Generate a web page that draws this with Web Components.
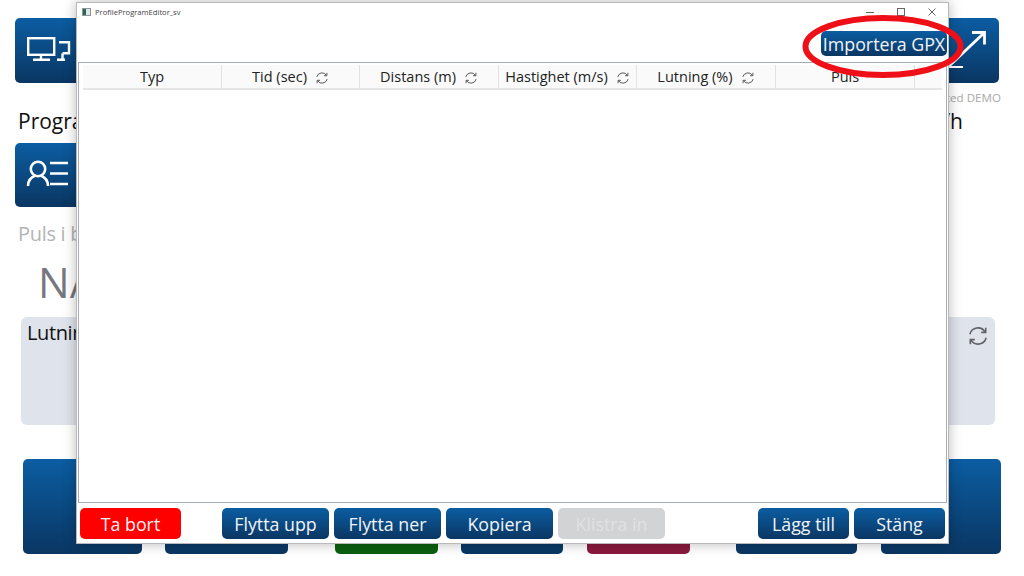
<!DOCTYPE html>
<html lang="sv">
<head>
<meta charset="utf-8">
<title>ProfileProgramEditor_sv</title>
<style>
  html, body { margin: 0; padding: 0; background: #fff; }
  body { width: 1024px; height: 576px; overflow: hidden; font-family: "Open Sans", "Liberation Sans", sans-serif; }
</style>
</head>
<body>

<trainer-page>
  <span slot="title">Program</span>
  <span slot="demo">Limited DEMO</span>
  <span slot="speed">0,0 km/h</span>
  <span slot="pulse">Puls i bpm</span>
  <span slot="value">N/A</span>
  <span slot="card">Lutning</span>
</trainer-page>

<editor-window title-text="ProfileProgramEditor_sv">
  <grid-cell>Typ</grid-cell>
  <grid-cell refresh>Tid (sec)</grid-cell>
  <grid-cell refresh>Distans (m)</grid-cell>
  <grid-cell refresh>Hastighet (m/s)</grid-cell>
  <grid-cell refresh>Lutning (%)</grid-cell>
  <grid-cell>Puls</grid-cell>
  <grid-cell></grid-cell>
</editor-window>

<script>
// shared icon used in the grid header and on the card behind the window
const REFRESH_SVG = `
  <svg viewBox="0 0 20 20" fill="none" stroke="currentColor" stroke-width="1.4" width="100%" height="100%">
    <path d="M2.600 8.400A7.600 7.600 0 0 1 16.400 6.200"/>
    <path d="M17.400 11.600A7.600 7.600 0 0 1 3.600 13.800"/>
    <path d="M17 2.600v4.100h-4.100"/>
    <path d="M3 17.400v-4.100h4.100"/>
  </svg>`;

class AppTile extends HTMLElement {
  constructor() {
    super();
    this.attachShadow({ mode: 'open' }).innerHTML = `
      <style>
        :host {
          display: block;
          box-sizing: border-box;
          border-radius: 5px;
          background: linear-gradient(#0b5da2, #0a3662);
          overflow: hidden;
        }
        :host([color="green"]) { background: #0b5f10; }
        :host([color="crimson"]) { background: #8a1a3f; }
      </style>
      <slot></slot>`;
  }
}
customElements.define('app-tile', AppTile);

class TrainerPage extends HTMLElement {
  constructor() {
    super();
    this.attachShadow({ mode: 'open' }).innerHTML = `
      <style>
        :host {
          display: block;
          box-sizing: border-box;
          width: 1024px;
          height: 576px;
          padding: 18px 25px 22px 15px;
          color: #111;
        }
        .wrap { display: flex; flex-direction: column; height: 100%; }
        .top { display: flex; justify-content: space-between; }
        .top app-tile { width: 100px; height: 65px; }
        .demo {
          align-self: flex-end;
          margin: 7px -2px 0 0;
          font-size: 11.600px;
          line-height: 16px;
          color: #a9a9a9;
        }
        .info { display: flex; justify-content: space-between; padding: 0 36px 0 3px; font-size: 21px; line-height: 28px; margin-top: 1px; }
        .user { width: 100px; height: 64px; margin-top: 8px; }
        .pulse { padding-left: 3px; margin-top: 13px; font-size: 20px; line-height: 27px; color: #b4b4b4; letter-spacing: -.3px; }
        .value { padding-left: 23px; margin-top: 5px; font-size: 42px; line-height: 60px; color: #77777f; }
        .card {
          display: flex;
          justify-content: space-between;
          box-sizing: border-box;
          height: 108px;
          margin: 5px 4px 0 6px;
          padding: 2px 6px;
          background: #dfe3eb;
          border-radius: 6px;
          font-size: 20px;
          line-height: 27px;
          letter-spacing: -.4px;
        }
        .card i { display: block; width: 22px; height: 22px; margin: 6px 0 0 0; color: #5f6166; }
        .bottom {
          display: flex;
          margin: auto 0 0 8px;
          height: 95px;
        }
        .bottom > app-tile { height: 95px; flex: none; }
        svg { display: block; width: 100%; height: 100%; }
      </style>
      <div class="wrap">
        <div class="top">
          <app-tile>
            <svg viewBox="0 0 100 65" fill="none" stroke="#fff" stroke-width="2.400">
              <rect x="13.200" y="20.200" width="26" height="16.600"/>
              <path d="M26 37v4M18 41.800h17"/>
              <path d="M44 24.200h10v11h-6.500M47.500 35.500v5.500M42 41.800h8"/>
            </svg>
          </app-tile>
          <app-tile>
            <svg viewBox="0 0 100 65" fill="none" stroke="#fff" stroke-width="2.800">
              <path d="M48 50L85 15M73 14.500h12.500v12"/>
              <path d="M50 49h14" stroke-width="2"/>
            </svg>
          </app-tile>
        </div>
        <div class="demo"><slot name="demo"></slot></div>
        <div class="info"><slot name="title"></slot><slot name="speed"></slot></div>
        <app-tile class="user">
          <svg viewBox="0 0 100 64" fill="none" stroke="#fff" stroke-width="2.600">
            <circle cx="23" cy="26" r="7.200"/>
            <path d="M13 43c0-5.500 3.500-9 7.500-10.500M33 43c0-5.500-3.500-9-7.500-10.500"/>
            <path d="M35 20h18M35 30.500h18M35 41h18"/>
          </svg>
        </app-tile>
        <div class="pulse"><slot name="pulse"></slot></div>
        <div class="value"><slot name="value"></slot></div>
        <div class="card"><slot name="card"></slot><i>${REFRESH_SVG}</i></div>
        <div class="bottom">
          <app-tile style="width:119px"></app-tile>
          <app-tile style="width:123px;margin-left:23px"></app-tile>
          <app-tile color="green" style="width:103px;margin-left:47px"></app-tile>
          <app-tile style="width:102px;margin-left:23px"></app-tile>
          <app-tile color="crimson" style="width:103px;margin-left:24px"></app-tile>
          <app-tile style="width:121px;margin-left:46px"></app-tile>
          <app-tile style="width:120px;margin-left:24px"></app-tile>
        </div>
      </div>`;
  }
}
customElements.define('trainer-page', TrainerPage);

class GridCell extends HTMLElement {
  constructor() {
    super();
    this.attachShadow({ mode: 'open' }).innerHTML = `
      <style>
        :host {
          display: flex;
          align-items: center;
          justify-content: center;
          gap: 8px;
          box-sizing: border-box;
          height: 25px;
          font-size: 14.500px;
          color: #222;
          background: #fafafa;
          border-right: 1px solid #e2e2e2;
          border-bottom: 2px solid #e6e6e6;
          white-space: nowrap;
        }
        :host(:last-child) { border-right: 0; }
        i { display: none; width: 14px; height: 14px; color: #555; }
        :host([refresh]) i { display: block; }
      </style>
      <slot></slot><i>${REFRESH_SVG}</i>`;
  }
}
customElements.define('grid-cell', GridCell);

class WinButton extends HTMLElement {
  constructor() {
    super();
    this.attachShadow({ mode: 'open' }).innerHTML = `
      <style>
        :host {
          display: flex;
          align-items: center;
          justify-content: center;
          box-sizing: border-box;
          height: 31px;
          border-radius: 5px;
          background: linear-gradient(#0b5da2, #0a3662);
          color: #f2f4f7;
          font-size: 17.800px;
          white-space: nowrap;
        }
        :host([kind="danger"]) { background: #ff0000; }
        :host([kind="disabled"]) { background: #d2d3d5; color: #e0e1e3; }
      </style>
      <slot></slot>`;
  }
}
customElements.define('win-button', WinButton);

class EditorWindow extends HTMLElement {
  constructor() {
    super();
    const title = this.getAttribute('title-text');
    this.attachShadow({ mode: 'open' }).innerHTML = `
      <style>
        /* floating window over the page, same for the callout ring */
        :host {
          position: absolute;
          left: 76px;
          top: 2px;
          width: 873px;
          height: 542px;
          box-sizing: border-box;
          display: flex;
          flex-direction: column;
          background: #fff;
          border: 1px solid #b9b9bd;
          box-shadow: 0 0 12px rgba(0,0,0,.28);
        }
        .titlebar { display: flex; align-items: center; height: 18px; padding: 0 0 0 5px; gap: 4px; font-size: 7.600px; color: #444; }
        .app { width: 9px; height: 8px; box-sizing: border-box; border: 1px solid #8f959c; background: linear-gradient(90deg, #2a6a4a 50%, #dfe6ee 50%); }
        .controls { margin-left: auto; display: flex; }
        .controls svg { display: block; width: 31px; height: 11px; }
        .tools { display: flex; justify-content: flex-end; height: 25px; margin: 10px 0 0; padding-right: 1px; }
        .tools win-button { width: 126px; height: 25px; }
        .grid {
          flex: 1;
          margin: 6px 1px 0;
          border: 1.500px solid #a9adb5;
          box-sizing: border-box;
          padding: 2px 4px 0 4px;
          min-height: 0;
        }
        .cols {
          display: grid;
          grid-template-columns: 139px 138px 139px 138px 139px 139px 1fr;
        }
        .actions { display: flex; height: 31px; padding: 5px 3px 4px 3px; }
        .actions win-button { width: 107px; margin-right: 5px; }
        .actions .remove { width: 101px; margin-right: 41px; }
        .actions .paste { margin-right: 93px; }
        .actions .small { width: 91px; }
        .actions .small:last-child { margin-right: 0; }
      </style>
      <div class="titlebar">
        <span class="app"></span><span>${title}</span>
        <div class="controls">
          <svg viewBox="0 0 31 11" fill="none" stroke="#666"><path d="M11 5.500h8"/></svg>
          <svg viewBox="0 0 31 11" fill="none" stroke="#666"><rect x="11.500" y="1.500" width="7" height="7"/></svg>
          <svg viewBox="0 0 31 11" fill="none" stroke="#666"><path d="M11.500 1.500l7 7M18.500 1.500l-7 7"/></svg>
        </div>
      </div>
      <div class="tools"><win-button>Importera GPX</win-button></div>
      <div class="grid"><div class="cols"><slot></slot></div></div>
      <div class="actions">
        <win-button kind="danger" class="remove">Ta bort</win-button>
        <win-button>Flytta upp</win-button>
        <win-button>Flytta ner</win-button>
        <win-button>Kopiera</win-button>
        <win-button kind="disabled" class="paste">Klistra in</win-button>
        <win-button class="small">Lägg till</win-button>
        <win-button class="small">Stäng</win-button>
      </div>`;
  }
}
customElements.define('editor-window', EditorWindow);

class CalloutRing extends HTMLElement {
  constructor() {
    super();
    this.attachShadow({ mode: 'open' }).innerHTML = `
      <style>
        :host { position: absolute; left: 800px; top: 12px; width: 166px; height: 70px; pointer-events: none; }
        svg { display: block; width: 100%; height: 100%; }
      </style>
      <svg viewBox="0 0 166 70" fill="none"><ellipse cx="83" cy="34.500" rx="77.500" ry="28.500" stroke="#ee0f17" stroke-width="6"/></svg>`;
  }
}
customElements.define('callout-ring', CalloutRing);

document.body.appendChild(document.createElement('callout-ring'));
</script>
</body>
</html>
